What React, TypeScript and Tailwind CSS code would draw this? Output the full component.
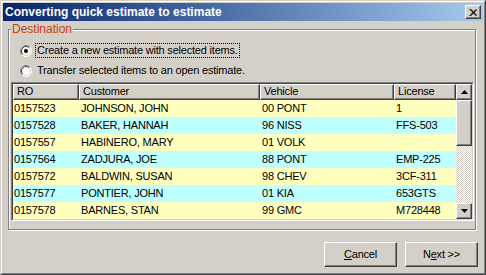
import type { ReactNode } from 'react'

const rows = [
  ['0157523', 'JOHNSON, JOHN', '00 PONT', '1'],
  ['0157528', 'BAKER, HANNAH', '96 NISS', 'FFS-503'],
  ['0157557', 'HABINERO, MARY', '01 VOLK', ''],
  ['0157564', 'ZADJURA, JOE', '88 PONT', 'EMP-225'],
  ['0157572', 'BALDWIN, SUSAN', '98 CHEV', '3CF-311'],
  ['0157577', 'PONTIER, JOHN', '01 KIA', '653GTS'],
  ['0157578', 'BARNES, STAN', '99 GMC', 'M728448'],
]

// raised 3d edge, classic win2k look
const raised =
  'bg-[#D4D0C8] border border-t-white border-l-white border-r-[#404040] border-b-[#404040] shadow-[inset_-1px_-1px_0_#808080]'

function Radio({ checked }: { checked?: boolean }) {
  return (
    <svg width="12" height="12" viewBox="0 0 12 12" className="shrink-0">
      <circle cx="6" cy="6" r="5.5" fill="#fff" />
      <path d="M2.11 9.89 A5.5 5.5 0 0 1 9.89 2.11" fill="none" stroke="#808080" />
      <path d="M9.89 2.11 A5.5 5.5 0 0 1 2.11 9.89" fill="none" stroke="#fff" />
      <path d="M2.82 9.18 A4.5 4.5 0 0 1 9.18 2.82" fill="none" stroke="#404040" />
      <path d="M9.18 2.82 A4.5 4.5 0 0 1 2.82 9.18" fill="none" stroke="#D4D0C8" />
      {checked && <circle cx="6" cy="6" r="2" fill="#000" />}
    </svg>
  )
}

function Arrow({ down }: { down?: boolean }) {
  return (
    <svg width="7" height="4" viewBox="0 0 7 4">
      <path d={down ? 'M0 0 H7 L3.5 4 Z' : 'M0 4 H7 L3.5 0 Z'} fill="#000" />
    </svg>
  )
}

function HeaderCell({ children }: { children: ReactNode }) {
  return <div className={`${raised} h-[16px] pl-[3px] leading-[13px] truncate`}>{children}</div>
}

function Button({ children }: { children: ReactNode }) {
  return (
    <button
      type="button"
      className={`${raised} w-[73px] h-[25px] flex items-center justify-center text-[11px] text-black`}
    >
      {children}
    </button>
  )
}

export default function App() {
  return (
    <div
      className="w-[486px] h-[275px] bg-[#D4D0C8] border border-t-[#D4D0C8] border-l-[#D4D0C8] border-r-[#404040] border-b-[#404040] text-[11px] tracking-[-0.2px] text-black"
      style={{ fontFamily: '"Liberation Sans", Arial, sans-serif' }}
    >
      <div className="h-full flex flex-col border border-t-white border-l-white border-r-[#808080] border-b-[#808080] p-px">
        {/* title bar */}
        <div className="h-[18px] flex items-center justify-between bg-gradient-to-r from-[#0A246A] to-[#A6CAF0] pl-[2px] pr-[2px]">
          <span className="text-white font-bold text-[12px] tracking-normal leading-none">
            Converting quick estimate to estimate
          </span>
          <div className={`${raised} w-[16px] h-[14px] flex items-center justify-center`}>
            <svg width="8" height="7" viewBox="0 0 8 7">
              <path d="M0.5 0 L7.5 7 M1.5 0 L7.5 6 M0.5 7 L7.5 0 M1.5 7 L7.5 1" stroke="#000" strokeWidth="1" fill="none" />
            </svg>
          </div>
        </div>

        <div className="flex-1 flex flex-col">
          {/* group box */}
          <div className="mt-[8px] ml-[5px] w-[468px] border border-[#808080] shadow-[inset_1px_1px_0_#fff,1px_1px_0_#fff] pl-[2px] pr-[1px] pb-[8px]">
            <div className="-mt-[8px] w-fit px-px bg-[#D4D0C8] text-[#C44210] text-[12px] tracking-normal leading-[14px]">
              Destination
            </div>

            <div className="flex flex-col gap-[3px] mt-[6px] pl-[9px]">
              <div className="h-[17px] flex items-center gap-[3px]">
                <Radio checked />
                <span className="border border-dotted border-black px-px leading-[13px]">
                  Create a new estimate with selected items.
                </span>
              </div>
              <div className="h-[17px] flex items-center gap-[3px]">
                <Radio />
                <span className="border border-transparent px-px leading-[13px]">
                  Transfer selected items to an open estimate.
                </span>
              </div>
            </div>

            {/* list view */}
            <div className="mt-[3px] w-[463px] flex border border-t-[#808080] border-l-[#808080] border-r-white border-b-white">
              <div className="flex flex-1 border border-t-[#404040] border-l-[#404040] border-r-[#D4D0C8] border-b-[#D4D0C8]">
                <div className="flex-1 flex flex-col">
                  <div className="grid grid-cols-[66px_181px_134px_62px]">
                    <HeaderCell>RO</HeaderCell>
                    <HeaderCell>Customer</HeaderCell>
                    <HeaderCell>Vehicle</HeaderCell>
                    <HeaderCell>License</HeaderCell>
                  </div>
                  {rows.map((r, i) => (
                    <div
                      key={r[0]}
                      className={`grid grid-cols-[66px_181px_134px_62px] h-[17px] leading-[17px] ${
                        i % 2 === 0 ? 'bg-[#FFFFC0]' : 'bg-[#C0FFFF]'
                      }`}
                    >
                      <span className="pl-[1px]">{r[0]}</span>
                      <span className="pl-[2px]">{r[1]}</span>
                      <span className="pl-[2px]">{r[2]}</span>
                      <span className="pl-[2px]">{r[3]}</span>
                    </div>
                  ))}
                </div>

                {/* scrollbar */}
                <div className="w-[16px] flex flex-col">
                  <div className={`${raised} h-[16px] flex items-center justify-center`}>
                    <Arrow />
                  </div>
                  <div className={`${raised} h-[46px]`} />
                  <div className="flex-1 bg-[repeating-conic-gradient(#fff_0%_25%,#D4D0C8_0%_50%)] bg-[length:2px_2px]" />
                  <div className={`${raised} h-[16px] flex items-center justify-center`}>
                    <Arrow down />
                  </div>
                </div>
              </div>
            </div>
          </div>

          <div className="mt-[12px] flex justify-end gap-[8px] pr-[5px]">
            <Button>
              <span className="underline">C</span>ancel
            </Button>
            <Button>
              N<span className="underline">e</span>xt &gt;&gt;
            </Button>
          </div>
        </div>
      </div>
    </div>
  )
}
